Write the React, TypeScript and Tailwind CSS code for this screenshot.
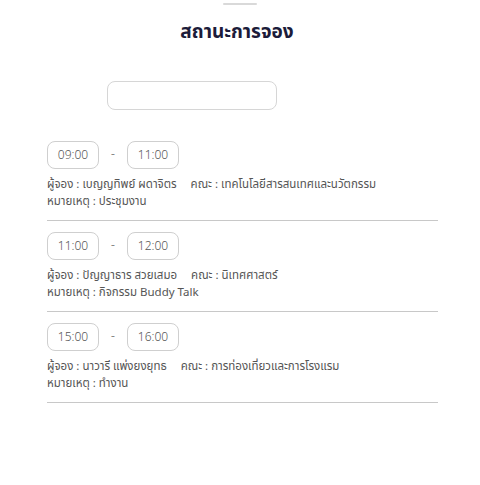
import React from "react";

const items = [
  { s: "09:00", e: "11:00", who: "เบญญทิพย์ ผดาจิตร", fac: "เทคโนโลยีสารสนเทศและนวัตกรรม", note: "ประชุมงาน" },
  { s: "11:00", e: "12:00", who: "ปัญญาธาร สวยเสมอ", fac: "นิเทศศาสตร์", note: "กิจกรรม Buddy Talk" },
  { s: "15:00", e: "16:00", who: "นาวารี แพ่งยงยุทธ", fac: "การท่องเที่ยวและการโรงแรม", note: "ทำงาน" },
];

export default function App() {
  return (
    <div className="w-[480px] h-[485px] bg-white" style={{ fontFamily: '"Noto Sans", "Noto Sans Thai", sans-serif' }}>
      <div className="flex justify-center pt-[3px]">
        <div className="w-[34px] h-[2px] bg-[#d9d9d9] rounded" />
      </div>
      <div className="text-center text-[19px] font-bold text-[#1c1c3a] mt-[11px] leading-[30px] pr-[6px]">สถานะการจอง</div>
      <div className="ml-[107px] mt-[35px] w-[170px] h-[29px] border border-[#d6d6d6] rounded-[8px]" />
      <div className="ml-[47px] w-[391px] mt-[31px]">
        {items.map((it, i) => (
          <div key={i} className={i > 0 ? "pt-[11px]" : ""}>
            <div className="flex items-center">
              <div className="w-[52px] h-[28px] border border-[#cfcfcf] rounded-[8px] flex items-center justify-center text-[12px] font-light text-[#555]">{it.s}</div>
              <div className="w-[28px] text-center text-[12px] text-[#888] -mt-[3px]">-</div>
              <div className="w-[52px] h-[28px] border border-[#cfcfcf] rounded-[8px] flex items-center justify-center text-[12px] font-light text-[#555]">{it.e}</div>
            </div>
            <div className="mt-[6px] text-[11.5px] leading-[17px] text-[#555]">
              <div>
                ผู้จอง : {it.who}
                <span className="ml-[14px]">คณะ : {it.fac}</span>
              </div>
              <div>หมายเหตุ : {it.note}</div>
            </div>
            <div className="mt-[11px] h-px bg-[#c8c8c8]" />
          </div>
        ))}
      </div>
    </div>
  );
}
